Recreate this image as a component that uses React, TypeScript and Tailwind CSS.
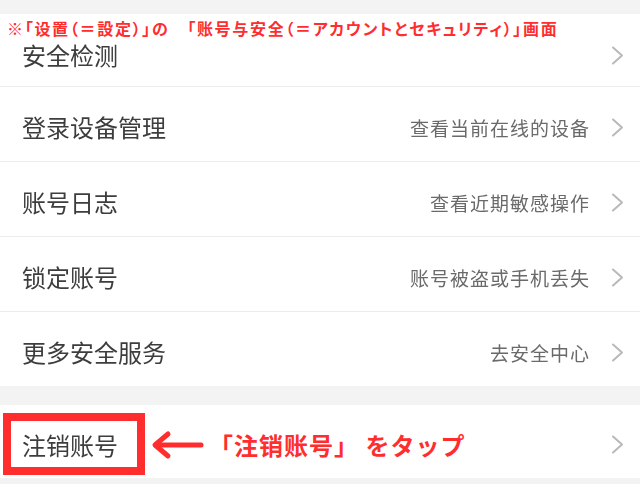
const rows = [
  { title: "登录设备管理", hint: "查看当前在线的设备" },
  { title: "账号日志", hint: "查看近期敏感操作" },
  { title: "锁定账号", hint: "账号被盗或手机丢失" },
  { title: "更多安全服务", hint: "去安全中心" },
];

const cjk = "font-['Noto_Sans_CJK_SC','Noto_Sans_CJK_JP',sans-serif]";
const jp = "font-['Noto_Sans_CJK_JP','Noto_Sans_CJK_SC',sans-serif]";

function Chevron() {
  return (
    <svg
      className="w-[13px] h-[19px] shrink-0 blur-[0.4px]"
      viewBox="0 0 13 19"
      fill="none"
      stroke="#b9b9b9"
      strokeWidth="2"
      strokeLinecap="round"
      strokeLinejoin="round"
    >
      <polyline points="2,1.5 11,9.5 2,17.5" />
    </svg>
  );
}

function Row({
  title,
  hint,
  first,
}: {
  title: string;
  hint?: string;
  first?: boolean;
}) {
  return (
    <div
      className={`flex items-center pl-[22px] pr-[16px] bg-white ${
        first ? "h-[72px] pt-[10px]" : "h-[75px] pt-[6px] border-t border-[#ececec]"
      }`}
    >
      <span className="text-[24px] leading-none text-[#3d3d3d] blur-[0.4px]">
        {title}
      </span>
      <div className="flex-1" />
      {hint && (
        <span className="text-[19px] leading-none tracking-[1px] text-[#6a6a6a] mr-[21px] blur-[0.4px]">
          {hint}
        </span>
      )}
      <Chevron />
    </div>
  );
}

export default function App() {
  return (
    <div className={`w-[640px] h-[484px] bg-[#f3f3f3] overflow-hidden ${cjk}`}>
      <div className="h-[14px]" />
      <div className="relative">
        <div
          className={`absolute left-[7px] top-[6px] z-10 text-[16px] leading-[16px] font-bold tracking-[1.7px] text-[#ff2d2d] whitespace-pre [font-feature-settings:'palt'] ${jp}`}
        >
          ※「设置（＝設定）」の　「账号与安全（＝アカウントとセキュリティ）」画面
        </div>
        <Row title="安全检测" first />
        {rows.map((r) => (
          <Row key={r.title} title={r.title} hint={r.hint} />
        ))}
      </div>
      <div className="h-[19px]" />
      <div className="relative flex items-center h-[73px] pt-[6px] pl-[22px] pr-[16px] bg-white">
        <span className="text-[24px] leading-none text-[#3d3d3d] blur-[0.4px]">
          注销账号
        </span>
        <div className="absolute left-[3px] top-[8px] w-[142px] h-[62px] border-[8px] border-[#ff2d2d]" />
        <svg
          className="ml-[33px] w-[54px] h-[30px]"
          viewBox="0 0 54 30"
          fill="none"
          stroke="#ff2d2d"
          strokeWidth="5"
          strokeLinecap="round"
          strokeLinejoin="round"
        >
          <line x1="5" y1="15" x2="50" y2="15" />
          <polyline points="17,4 4,15 17,26" />
        </svg>
        <span
          className={`ml-[4px] text-[24px] leading-none font-bold tracking-[1px] text-[#ff2d2d] whitespace-pre ${jp}`}
        >
          「注销账号」 をタップ
        </span>
        <div className="flex-1" />
        <Chevron />
      </div>
    </div>
  );
}
